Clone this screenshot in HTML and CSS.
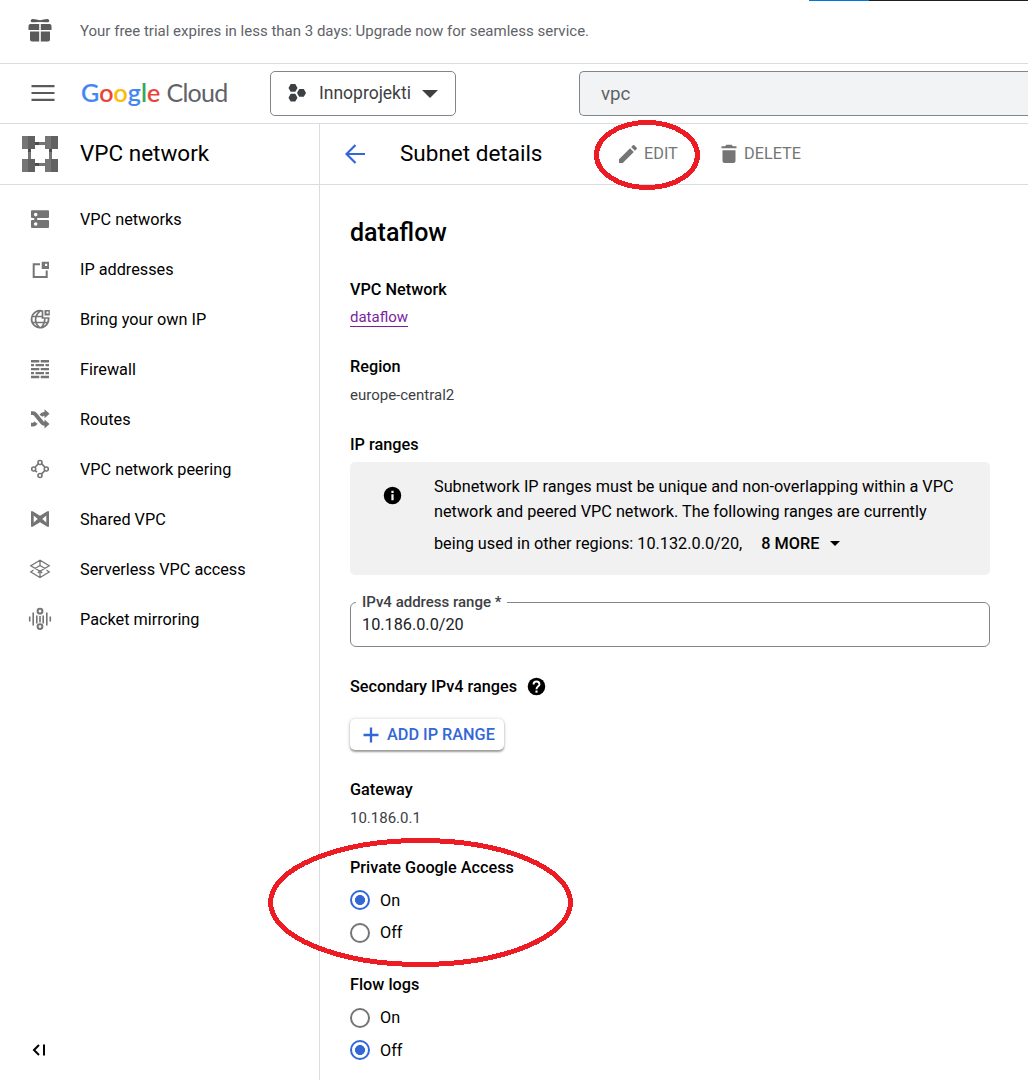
FILE: index.html
```html
<!DOCTYPE html>
<html lang="en">
<head>
<meta charset="utf-8">
<title>Subnet details</title>
<link rel="stylesheet" href="styles.css">
</head>
<body>
<div class="page">
  <div class="window-edge"></div>
  <div class="trial">
    <svg class="gift" width="24" height="24" viewBox="0 0 24 24"><path d="M12 4.200C9.500 3.500 5 5 3.200 4C2 3 3 .8 5 1C7 1 10 2 12 2.200C14 2 17 1 19 1C21 .8 22 3 20.800 4C19 5 14.500 3.500 12 4.200z"/><path d="M2.500 6H11.200V12H.5V8q0-2 2-2zM12.800 6H21.500q2 0 2 2V12H12.800zM2 13.500H11.200V23.500H4q-2 0-2-2zM12.800 13.500H22V21.500q0 2-2 2H12.800z"/></svg>
    <span>Your free trial expires in less than 3 days: Upgrade now for seamless service.</span>
  </div>
  <header class="header">
    <svg class="burger" width="24" height="18" viewBox="0 0 24 18"><path d="M.5 1h23v2.200H.5zm0 6.900h23v2.200H.5zm0 6.900h23V17H.5z"/></svg>
    <div class="logo"><b class="g1">G</b><b class="g2">o</b><b class="g3">o</b><b class="g1">g</b><b class="g4">l</b><b class="g2">e</b><span>Cloud</span></div>
    <div class="project">
      <svg width="20" height="22" viewBox="0 0 20 22"><path d="M2.700 1h4.600l2.200 3.900-2.200 3.900H2.700L.5 4.900zm8.500 5h4.600l2.200 3.900-2.200 3.900h-4.600L9 9.900zM2.700 10.800h4.600l2.200 3.900-2.200 3.900H2.700L.5 14.700z"/></svg>
      <span class="project-name">Innoprojekti</span>
      <svg class="caret" width="16" height="8" viewBox="0 0 16 8"><path d="M0 0h16L8 8z"/></svg>
    </div>
    <div class="search">vpc</div>
  </header>
  <div class="body">
    <nav class="sidebar">
      <div class="product">
        <svg width="36" height="36" viewBox="0 0 36 36"><path fill="#757575" d="M12 6h12v3H12zM12 27h12v3H12zM6 12h3v12H6zM27 12h3v12h-3z"/><path fill="#4d4d4d" d="M13 6h4v3h-4zM13 27h4v3h-4zM6 13h3v3H6zM27 13h3v3h-3z"/><path fill="#757575" d="M0 0h13v13H0zM23 0h13v13H23zM0 23h13v13H0zM23 23h13v13H23z"/><path fill="#616161" d="M6 0h7v13H6zM29 0h7v13h-7zM6 23h7v13H6zM29 23h7v13h-7z"/></svg>
        <span>VPC network</span>
      </div>
      <ul class="menu">
        <li><svg viewBox="0 0 24 24"><path fill-rule="evenodd" d="M4 3.300h16q1 0 1 1V10q0 1-1 1H4q-1 0-1-1V4.300q0-1 1-1zm3.700 2.500a1.800 1.800 0 1 0 0 3.600a1.800 1.800 0 1 0 0-3.600zM4 13h16q1 0 1 1v6q0 1-1 1H4q-1 0-1-1v-6q0-1 1-1zm3.700 2.200a1.800 1.800 0 1 0 0 3.600a1.800 1.800 0 1 0 0-3.600z"/><path d="M6.200 10.500h3v3h-3z"/></svg>VPC networks</li>
        <li><svg viewBox="0 0 24 24"><path class="line w2" d="M12 7.300H5.700V20h13v-6.500"/><path fill-rule="evenodd" d="M13.700 4.800H21V12h-7.300zM17 6.800V9h2.200V6.800z"/></svg>IP addresses</li>
        <li><svg viewBox="0 0 24 24"><path class="line w17" d="M15 4.200A8.500 8.500 0 1 0 20.500 11M12.500 3.600C6 9 6 16 12 21M13 21q3.600-4 3.900-9.500M4 9.500h10M4 15.500h16"/><path class="line w17" d="M14.500 4v7h7"/><path fill-rule="evenodd" d="M16.500 3h5.300v5.500h-5.300zM18.500 4.500v2h2v-2z"/></svg>Bring your own IP</li>
        <li><svg viewBox="0 0 24 24"><path d="M3 3h8.300v2.400H3zM12.700 3H21v2.400h-8.300zM3 6.900h3v2.400H3zM7.500 6.900h8.500v2.400H7.500zM17.500 6.900H21v2.400h-3.500zM3 10.900h8.300v2.400H3zM12.700 10.900H21v2.400h-8.300zM3 14.900h3v2.400H3zM7.500 14.900h8.500v2.400H7.500zM17.500 14.900H21v2.400h-3.500zM3 18.800h8.300v2.400H3zM12.700 18.800H21v2.400h-8.300z"/></svg>Firewall</li>
        <li><svg viewBox="0 0 24 24"><path class="line w4" d="M3 6.200h2q1.500 0 2.500 1.300l6.500 8q1 1.300 2.500 1.300H18M3 17.600h2q1.700 0 3-2M13 8.800Q14.300 6.800 16 6.800h2"/><path d="M16.500 2.300l5 4.500-5 4.500zM16.500 12.500l5 4.500-5 4.500z"/></svg>Routes</li>
        <li><svg viewBox="0 0 24 24"><g class="line w15"><circle cx="12" cy="5.500" r="2"/><circle cx="5.700" cy="12" r="2"/><circle cx="18.300" cy="12" r="2"/><circle cx="12" cy="18.500" r="2"/><path d="M10.300 6.900L7.200 10M13.700 6.900l3.200 3.200M16.900 13.600l-3.300 3.300M7.200 13.700l1.800 1.500"/></g></svg>VPC network peering</li>
        <li><svg viewBox="0 0 24 24"><path fill-rule="evenodd" d="M3 4.300h1.700L12 8.800l7.300-4.500H21v15.400h-1.700L12 15.200l-7.300 4.500H3zM5.700 8.500v7l4-3.500zM18.300 8.500v7l-4-3.500z"/></svg>Shared VPC</li>
        <li><svg viewBox="0 0 24 24"><g class="line w13"><path d="M12 3.200L2.800 8.700l9.200 5.500 9.200-5.500zM12 3.200v6.300M7 11.500l5-3 5 3M5.500 13l-2.700 2 9.200 5.500 9.200-5.500-2.700-2M12 20v-6.500M9.800 16l2.200-2.200 2.200 2.200"/></g></svg>Serverless VPC access</li>
        <li><svg viewBox="0 0 24 24"><g class="line w15"><path d="M1.700 9.500v5M5.200 5.500v13M8.800 8.500v8M15.200 8.500v8M18.800 5.500v13M22.300 9.500v5M12 9v6.500"/><circle cx="12" cy="4.200" r="2.400" stroke-width="2"/><circle cx="12" cy="19.600" r="2.400" stroke-width="2"/></g></svg>Packet mirroring</li>
      </ul>
      <svg class="collapse" width="14" height="12" viewBox="0 0 14 12"><path d="M7 1L2 6l5 5M12 .5v11"/></svg>
    </nav>
    <main class="main">
      <div class="toolbar">
        <svg class="back" width="20" height="20" viewBox="0 0 20 20"><path d="M20 10H2M10.500 1L1.500 10l9 9"/></svg>
        <h2>Subnet details</h2>
        <div class="action edit">
          <svg width="24" height="24" viewBox="0 0 24 24"><path d="M3 17.250V21h3.750L17.810 9.940l-3.750-3.750L3 17.250zM20.710 7.040a1 1 0 0 0 0-1.410l-2.340-2.340a1 1 0 0 0-1.410 0l-1.830 1.830 3.750 3.750 1.830-1.830z"/></svg>
          <span>EDIT</span>
        </div>
        <div class="action delete">
          <svg width="24" height="24" viewBox="0 0 24 24"><path d="M5.500 8.200h13V19q0 2-2 2h-9q-2 0-2-2zM19.500 4.300v2h-15v-2H8l1.500-1.500h5L16 4.300z"/></svg>
          <span>DELETE</span>
        </div>
      </div>
      <div class="details">
        <h1>dataflow</h1>
        <h3 class="first">VPC Network</h3>
        <div class="value"><a>dataflow</a></div>
        <h3>Region</h3>
        <div class="value">europe-central2</div>
        <h3>IP ranges</h3>
        <div class="notice">
          <svg width="21" height="21" viewBox="0 0 24 24"><path fill-rule="evenodd" d="M12 2a10 10 0 1 0 0 20a10 10 0 1 0 0-20zM10.700 10.700h2.600V17.500h-2.600zM10.700 6.500h2.600v2.600h-2.600z"/></svg>
          <div class="notice-text">
            <div>Subnetwork IP ranges must be unique and non-overlapping within a VPC</div>
            <div>network and peered VPC network. The following ranges are currently</div>
            <div class="last">being used in other regions: 10.132.0.0/20, <b>8 MORE</b><svg width="10" height="5" viewBox="0 0 10 5"><path d="M0 0h10L5 5z"/></svg></div>
          </div>
        </div>
        <div class="field"><label>IPv4 address range *</label><span>10.186.0.0/20</span></div>
        <h3 class="with-help">Secondary IPv4 ranges
          <svg width="21" height="21" viewBox="0 0 24 24"><circle cx="12" cy="12" r="10"/><path class="mark" d="M8.600 9.600a3.400 3.400 0 1 1 6.800 0c0 2.200-3.400 2.400-3.400 5.400"/><path fill="#fff" d="M10.800 16.600h2.400V19h-2.400z"/></svg>
        </h3>
        <div class="add"><svg width="16" height="16" viewBox="0 0 16 16"><path d="M8 .5v15M.5 8h15"/></svg><span>ADD IP RANGE</span></div>
        <h3>Gateway</h3>
        <div class="value">10.186.0.1</div>
        <h3>Private Google Access</h3>
        <div class="radio"><i class="on"></i>On</div>
        <div class="radio off"><i></i><span>Off</span></div>
        <h3 class="flow">Flow logs</h3>
        <div class="radio low"><i></i><span>On</span></div>
        <div class="radio"><i class="on"></i>Off</div>
      </div>
    </main>
  </div>
  <svg class="marks" width="1028" height="1080" viewBox="0 0 1028 1080"><ellipse cx="647" cy="155" rx="50.500" ry="32.500"/><ellipse cx="420.500" cy="902.500" rx="150" ry="62"/></svg>
</div>
</body>
</html>
```
FILE: styles.css
```css
* { box-sizing: border-box; }
body { margin: 0; background: #fff; color: #000; font-family: Roboto, sans-serif; }
h1, h2, h3, ul { margin: 0; padding: 0; }
svg { display: block; flex: none; }
.page { position: relative; width: 1028px; height: 1080px; overflow: hidden; display: flex; flex-direction: column; }
.window-edge { position: absolute; top: 0; left: 809px; right: 0; height: 1px; background: linear-gradient(90deg, #0078d7 60px, #1f1f1f 60px); }

.trial { height: 64px; flex: none; display: flex; align-items: center; padding: 0 0 3px 28px; border-bottom: 1px solid #dadce0; font-size: 15px; color: #5f6368; }
.trial span { padding-top: 2px; }
.gift { fill: #5a5a5a; margin-right: 28px; }

.header { height: 60px; flex: none; display: flex; align-items: center; padding-left: 31px; border-bottom: 1px solid #dadce0; }
.burger { fill: #5a5a5a; margin-top: -1px; }
.logo { width: 188px; padding-left: 26px; margin-top: -3px; font: 400 25px/30px Lato, sans-serif; color: #5f6368; white-space: nowrap; }
.logo b { font-weight: 500; -webkit-text-stroke: 0.2px currentColor; letter-spacing: 0.1px; }
.logo span { margin-left: 6px; letter-spacing: -0.7px; }
.g1 { color: #4285f4; }
.g2 { color: #ea4335; }
.g3 { color: #fbbc04; }
.g4 { color: #34a853; }
.project { width: 186px; height: 45px; margin-left: 27px; display: flex; align-items: center; padding-left: 17px; border: 1px solid #80868b; border-radius: 5px; color: #3c4043; fill: #3c4043; font-size: 17.5px; }
.project-name { width: 92px; margin: -1px 0 0 11px; white-space: nowrap; }
.caret { margin-left: 11px; }
.search { flex: 1; height: 45px; margin-left: 123px; padding-left: 21px; border: 1px solid #80868b; border-right: 0; border-radius: 5px 0 0 5px; background: #f1f3f4; color: #5f6368; font-size: 18.75px; line-height: 44px; }

.body { flex: 1; display: flex; min-height: 0; }
.sidebar { width: 320px; flex: none; display: flex; flex-direction: column; border-right: 1px solid #dadce0; }
.product { height: 61px; flex: none; display: flex; align-items: center; padding-left: 22px; border-bottom: 1px solid #dadce0; font-size: 22.5px; }
.product span { margin: -2px 0 0 22px; }
.menu { list-style: none; padding-top: 9px; flex: 1; }
.menu li { height: 50px; display: flex; align-items: center; gap: 28px; padding-left: 28px; font-size: 16.25px; }
.menu svg { width: 24px; height: 24px; fill: #757575; }
.menu .line { fill: none; stroke: #757575; }
.w13 { stroke-width: 1.3; }
.w15 { stroke-width: 1.6; }
.w17 { stroke-width: 1.7; }
.w2 { stroke-width: 2; }
.w4 { stroke-width: 3.8; }
.collapse { margin: 0 0 24px 32px; fill: none; stroke: #000; stroke-width: 2; }

.main { flex: 1; min-width: 0; }
.toolbar { height: 61px; display: flex; align-items: center; padding-left: 25px; border-bottom: 1px solid #dadce0; }
.back { fill: none; stroke: #3367d6; stroke-width: 2.2; }
.toolbar h2 { width: 251px; padding-left: 35px; margin-top: -2px; font-size: 22.5px; font-weight: 400; }
.action { display: flex; align-items: center; gap: 4px; color: #757575; fill: #757575; font-size: 16.25px; }
.action span { width: 73px; margin-top: -2px; }
.delete { gap: 3px; }

.details { width: 670px; padding: 33px 0 0 30px; }
h1 { font-size: 25px; line-height: 30px; font-weight: 500; }
h3 { font-size: 16.25px; line-height: 20px; font-weight: 500; margin-top: 30px; }
h3.first { margin-top: 32px; }
.value { margin-top: 8px; height: 20px; font-size: 15px; line-height: 20px; color: #3c4043; }
.first + .value { margin-top: 7px; }
.value a { display: inline-block; height: 19px; line-height: 19px; color: #7b1fa2; border-bottom: 1px solid #7b1fa2; }
.notice { height: 113px; margin-top: 7px; display: flex; padding: 12px 0 0 32px; border-radius: 5px; background: #f1f1f1; font-size: 16.25px; line-height: 25px; }
.notice > svg { margin-top: 10.5px; }
.notice-text { margin-left: 31px; white-space: nowrap; }
.last { display: flex; align-items: center; margin-top: 7px; }
.last b { font-weight: 500; margin-left: 19px; }
.last svg { margin-left: 11px; }
.field { position: relative; height: 45px; margin-top: 27px; padding-left: 11px; border: 1px solid #80868b; border-radius: 6px; font-size: 16.25px; line-height: 43px; color: #202124; }
.field label { position: absolute; left: 5px; top: -11px; padding: 0 6px; background: #fff; font-size: 15px; line-height: 20px; font-weight: 500; color: #3c4043; white-space: nowrap; }
.with-help { display: flex; align-items: center; gap: 9px; height: 20px; }
.with-help svg { margin-top: -1px; }
.with-help .mark { fill: none; stroke: #fff; stroke-width: 2.2; }
.add { width: 154px; height: 31px; margin-top: 22px; display: flex; align-items: center; gap: 8px; padding-left: 13px; border-radius: 5px; box-shadow: 0 1.5px 2px rgba(0,0,0,.35), 0 0 4px rgba(0,0,0,.14); color: #3367d6; font-size: 16.25px; font-weight: 500; white-space: nowrap; }
.add svg { stroke: #3367d6; stroke-width: 2.3; }
.radio { margin-top: 12px; height: 20px; display: flex; align-items: center; gap: 10px; font-size: 16.25px; }
.radio i { width: 20px; height: 20px; border: 2px solid #757575; border-radius: 50%; }
.radio i.on { border-color: #3367d6; background: radial-gradient(circle, #3367d6 4.7px, transparent 5.3px); }
.radio span { margin-top: -2px; }
.radio.off, .radio.low { margin-top: 13px; }
.flow { margin-top: 32px; }

.marks { position: absolute; left: 0; top: 0; fill: none; stroke: #ed1c24; stroke-width: 5; shape-rendering: crispEdges; }
```
